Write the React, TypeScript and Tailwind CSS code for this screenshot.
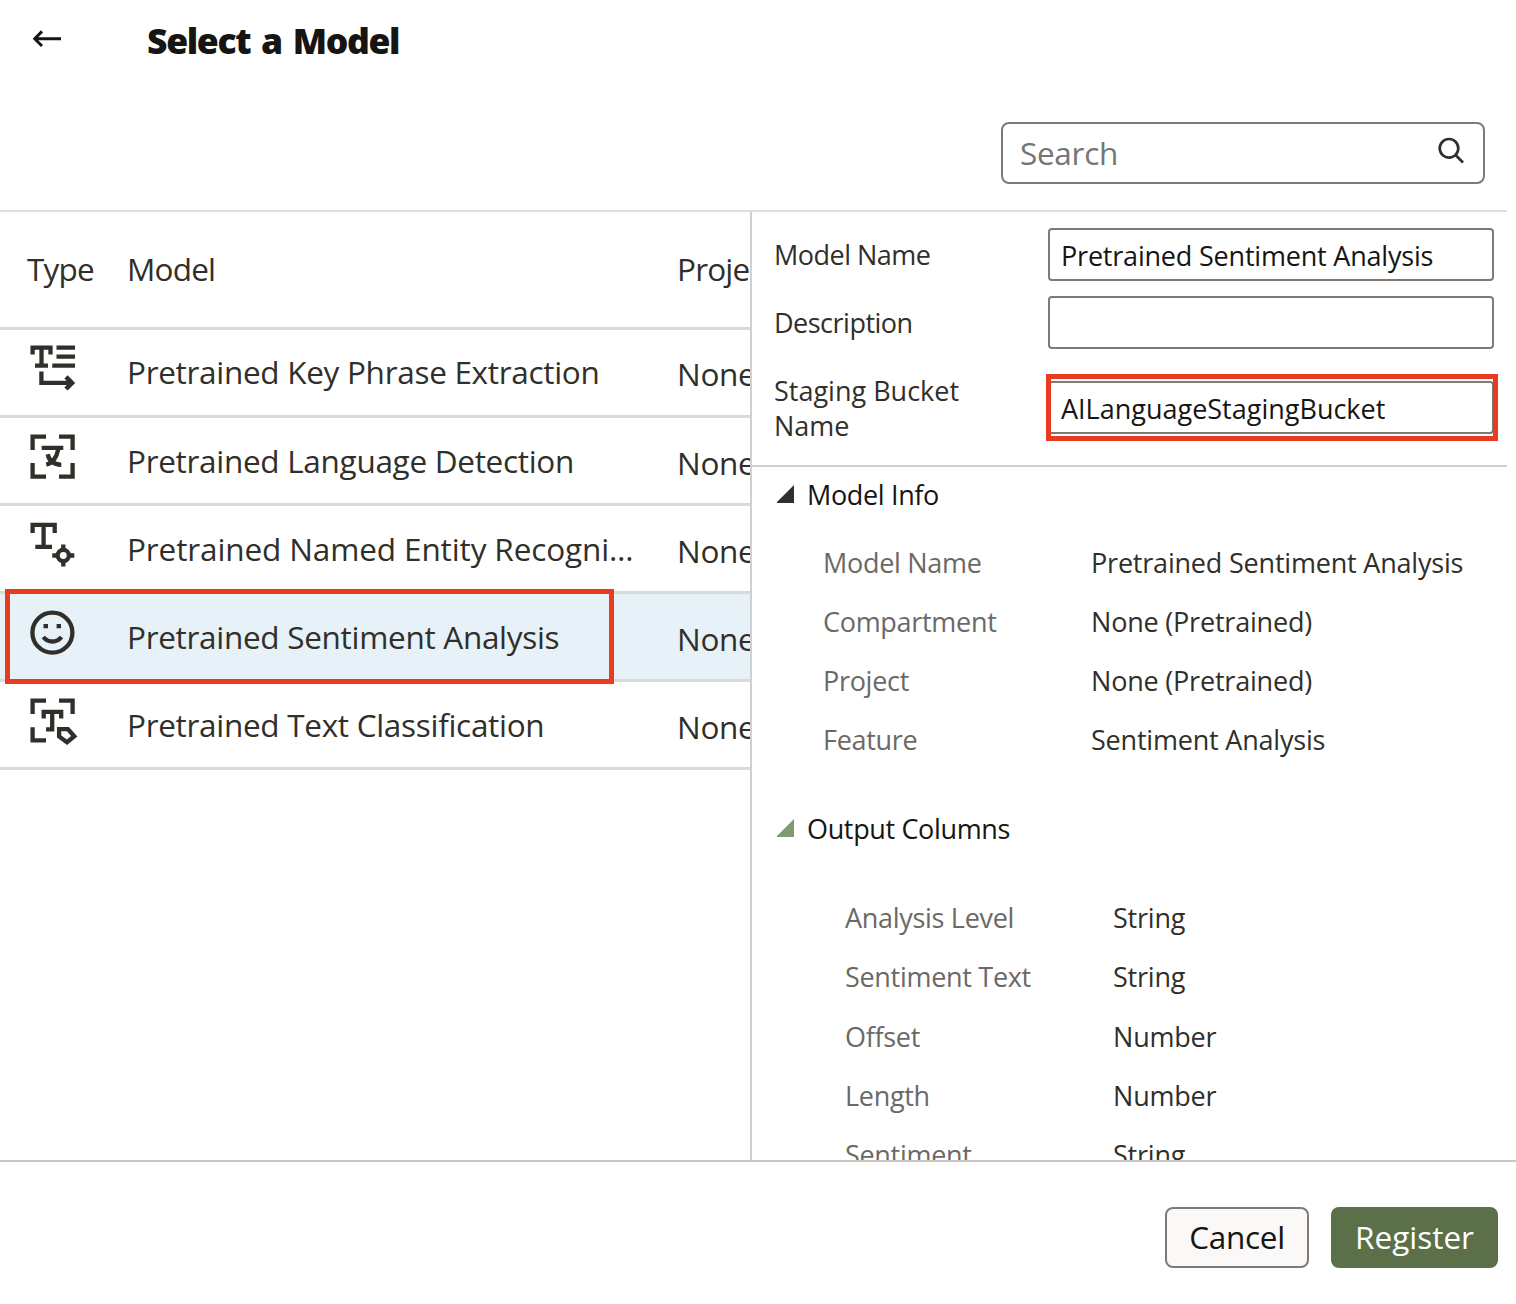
import React from "react";

const iconProps = {
  width: 52,
  height: 85,
  viewBox: "0 0 52 85",
  fill: "none",
  stroke: "#312f2a",
  strokeWidth: 4.3,
};

const KeyPhraseIcon = () => (
  <svg {...iconProps}>
    <path d="M4.6 24.4V17.7H22.5V24.4M13.5 17.7V35.5M7 35.6H20M28.5 17.7H47M28.5 26.7H47M24.3 35.6H47M13.4 41.5V52.8H44" />
    <path d="M38 46.8L44 52.9L38 59" strokeWidth="4.6" />
  </svg>
);

const LanguageIcon = () => (
  <svg {...iconProps}>
    <path d="M4.6 32V18.7H18M31 18.7H44.6V32M44.6 45V58.6H31M18 58.6H4.6V45M13.7 29.9H35.3" />
    <path d="M30.3 31C29 38 26 44.5 18.3 46.8M19.7 36.3C21 42.5 25.5 46.5 33.3 46.8" />
  </svg>
);

const EntityIcon = () => (
  <svg {...iconProps}>
    <path d="M4.6 27V18.8H26.7V27M15.6 18.8V40.8M7.3 40.8H24" />
    <circle cx="35.3" cy="49.5" r="5.6" />
    <path d="M35.3 38.5V43M35.3 56V60.5M24.3 49.5H29M42 49.5H46.3" />
  </svg>
);

const SmileIcon = () => (
  <svg {...iconProps}>
    <circle cx="24.4" cy="38.7" r="20" />
    <path d="M15.5 32.2H20M28.6 32.2H33M15.3 43C20 49 28.8 49 33.5 43" />
  </svg>
);

const ClassifyIcon = () => (
  <svg {...iconProps}>
    <path d="M4.6 32V18.6H18M31 18.6H44.6V32M18 58.4H4.6V45.3" />
    <path d="M15.7 36.5V29.8H33.2V36.5M24.2 29.8V47.4M18 47.3H26.3" />
    <path d="M31.1 47.2H40L46.3 54.2L39 60.2L31.1 54.4Z" />
  </svg>
);

const models = [
  { name: "Pretrained Key Phrase Extraction", Icon: KeyPhraseIcon, text: "pb-0.5", project: "pt-0.5" },
  { name: "Pretrained Language Detection", Icon: LanguageIcon, text: "", project: "pt-1" },
  { name: "Pretrained Named Entity Recogni…", Icon: EntityIcon, text: "tracking-[-0.12px]", project: "pt-1" },
  { name: "Pretrained Sentiment Analysis", Icon: SmileIcon, text: "", project: "pt-1", selected: true },
  { name: "Pretrained Text Classification", Icon: ClassifyIcon, text: "", project: "pt-1" },
];

const info = [
  ["Model Name", "Pretrained Sentiment Analysis"],
  ["Compartment", "None (Pretrained)"],
  ["Project", "None (Pretrained)"],
  ["Feature", "Sentiment Analysis"],
];

const columns = [
  ["Analysis Level", "String"],
  ["Sentiment Text", "String"],
  ["Offset", "Number"],
  ["Length", "Number"],
  ["Sentiment", "String"],
];

function Field({ label, value, highlighted }: { label: string; value: string; highlighted?: boolean }) {
  return (
    <div className="flex h-[70px]">
      <label
        className={
          highlighted
            ? "w-[274px] shrink-0 pr-16 pt-[9px] leading-[35px] tracking-normal"
            : "w-[274px] shrink-0 pr-16 pt-[9px] leading-[35px] tracking-[-0.5px]"
        }
      >
        {label}
      </label>
      <div className={highlighted ? "relative mt-[17px] h-[53px] w-[446px] tracking-normal" : "h-[53px] w-[446px]"}>
        <input
          className="block h-full w-full rounded-[4px] border-2 border-[#7f7a76] bg-white px-[11px] pt-0.5 text-[#161513] outline-none"
          defaultValue={value}
        />
        {highlighted && <div className="absolute -left-0.5 -top-[7px] h-[67px] w-[452px] border-5 border-[#e83c20]" />}
      </div>
    </div>
  );
}

function SectionTitle({ title, fill }: { title: string; fill: string }) {
  return (
    <div className="flex h-9 items-center gap-[13px] pl-[25px] tracking-[-0.35px] text-[#161513]">
      <svg width="17" height="18" viewBox="0 0 17 18" fill={fill}>
        <path d="M17 0V18H-1Z" />
      </svg>
      <span className="pt-0.5">{title}</span>
    </div>
  );
}

function Pairs({ rows }: { rows: string[][] }) {
  return (
    <dl>
      {rows.map(([k, v]) => (
        <div key={k} className="flex h-[59.2px] items-center">
          <dt className="w-[268px] shrink-0 tracking-[-0.3px] text-[#6b6966]">{k}</dt>
          <dd className="whitespace-nowrap text-[#312f2a]">{v}</dd>
        </div>
      ))}
    </dl>
  );
}

export default function App() {
  return (
    <div className="flex h-[1304px] w-[1516px] flex-col overflow-hidden bg-white font-['Open_Sans',sans-serif] text-[#312f2a]">
      <header className="flex h-[84px] items-center">
        <svg className="mb-[7px] ml-8" width="30" height="18" viewBox="0 0 30 18" fill="none" stroke="#161513" strokeWidth="2.9">
          <path d="M2.5 8.7H29M10 1.4L2.7 8.7L10 16" />
        </svg>
        <h1 className="mb-0.5 ml-[85px] text-[35.5px] font-extrabold leading-none tracking-[-1.35px] text-[#161513] [word-spacing:3px]">
          Select a Model
        </h1>
      </header>

      <div className="flex h-[126px] justify-end pr-[31px] pt-[38px]">
        <div className="flex h-[62px] w-[484px] items-center justify-between rounded-[8px] border-2 border-[#7f7a76] pl-[17px] pr-[18px]">
          <span className="text-[31.5px] tracking-[-0.3px] text-[#757575]">Search</span>
          <svg className="mb-1" width="28" height="28" viewBox="0 0 28 28" fill="none" stroke="#312f2a" strokeWidth="2.7">
            <circle cx="12" cy="11.3" r="9.3" />
            <path d="M18.5 18L26 25.5" />
          </svg>
        </div>
      </div>

      <main className="flex h-[950px] w-[1507px] shrink-0 border-t-2 border-[#dfdfdb]">
        <section className="w-[752px] shrink-0 overflow-hidden whitespace-nowrap border-r-2 border-[#d0d0d0] text-[31.5px] tracking-[-0.3px]">
          <div className="flex h-[118px] items-center border-b-3 border-[#d1dbe1] pb-0.5 tracking-[-0.8px]">
            <span className="w-[127px] shrink-0 pl-[27px]">Type</span>
            <span className="w-[550px] shrink-0">Model</span>
            <span>Project</span>
          </div>
          {models.map(({ name, Icon, text, project, selected }) => (
            <div
              key={name}
              className={
                selected
                  ? "relative flex h-[88px] items-center border-b-3 border-[#dadada] bg-[#e6f1f8]"
                  : "flex h-[88px] items-center border-b-3 border-[#dadada]"
              }
            >
              <div className="w-[127px] shrink-0 pl-7">
                <Icon />
              </div>
              <span className={`w-[550px] shrink-0 ${text}`}>{name}</span>
              <span className={project}>None (Pretrained)</span>
              {selected && <div className="absolute -top-[5px] left-[5px] h-[95px] w-[609px] border-5 border-[#e83c20]" />}
            </div>
          ))}
        </section>

        <section className="w-[755px] overflow-hidden text-[27px] tracking-[-0.2px]">
          <div className="flex h-[255px] flex-col border-b-2 border-[#d0d0d0] pl-[22px] pt-4">
            <div className="h-[68px]">
              <Field label="Model Name" value="Pretrained Sentiment Analysis" />
            </div>
            <div className="h-[68px]">
              <Field label="Description" value="" />
            </div>
            <Field label="Staging Bucket Name" value="AILanguageStagingBucket" highlighted />
          </div>
          <div className="pt-[9px]">
            <SectionTitle title="Model Info" fill="#312f2a" />
          </div>
          <div className="pl-[71px] pt-[21.5px]">
            <Pairs rows={info} />
          </div>
          <div className="pt-[39.5px]">
            <SectionTitle title="Output Columns" fill="#7f9a6c" />
          </div>
          <div className="pl-[93px] pt-[43.2px]">
            <Pairs rows={columns} />
          </div>
        </section>
      </main>

      <footer className="flex flex-1 justify-end gap-[22px] border-t-2 border-[#cac6c3] pr-[18px] pt-[45px] text-[31.5px] tracking-[-0.3px]">
        <button className="h-[61px] w-[144px] rounded-[8px] border-2 border-[#7f7a76] bg-[#fbf9f8] pb-0.5 text-[#161513]">Cancel</button>
        <button className="h-[61px] w-[167px] rounded-[8px] bg-[#5b7049] pb-0.5 tracking-normal text-white">Register</button>
      </footer>
    </div>
  );
}
